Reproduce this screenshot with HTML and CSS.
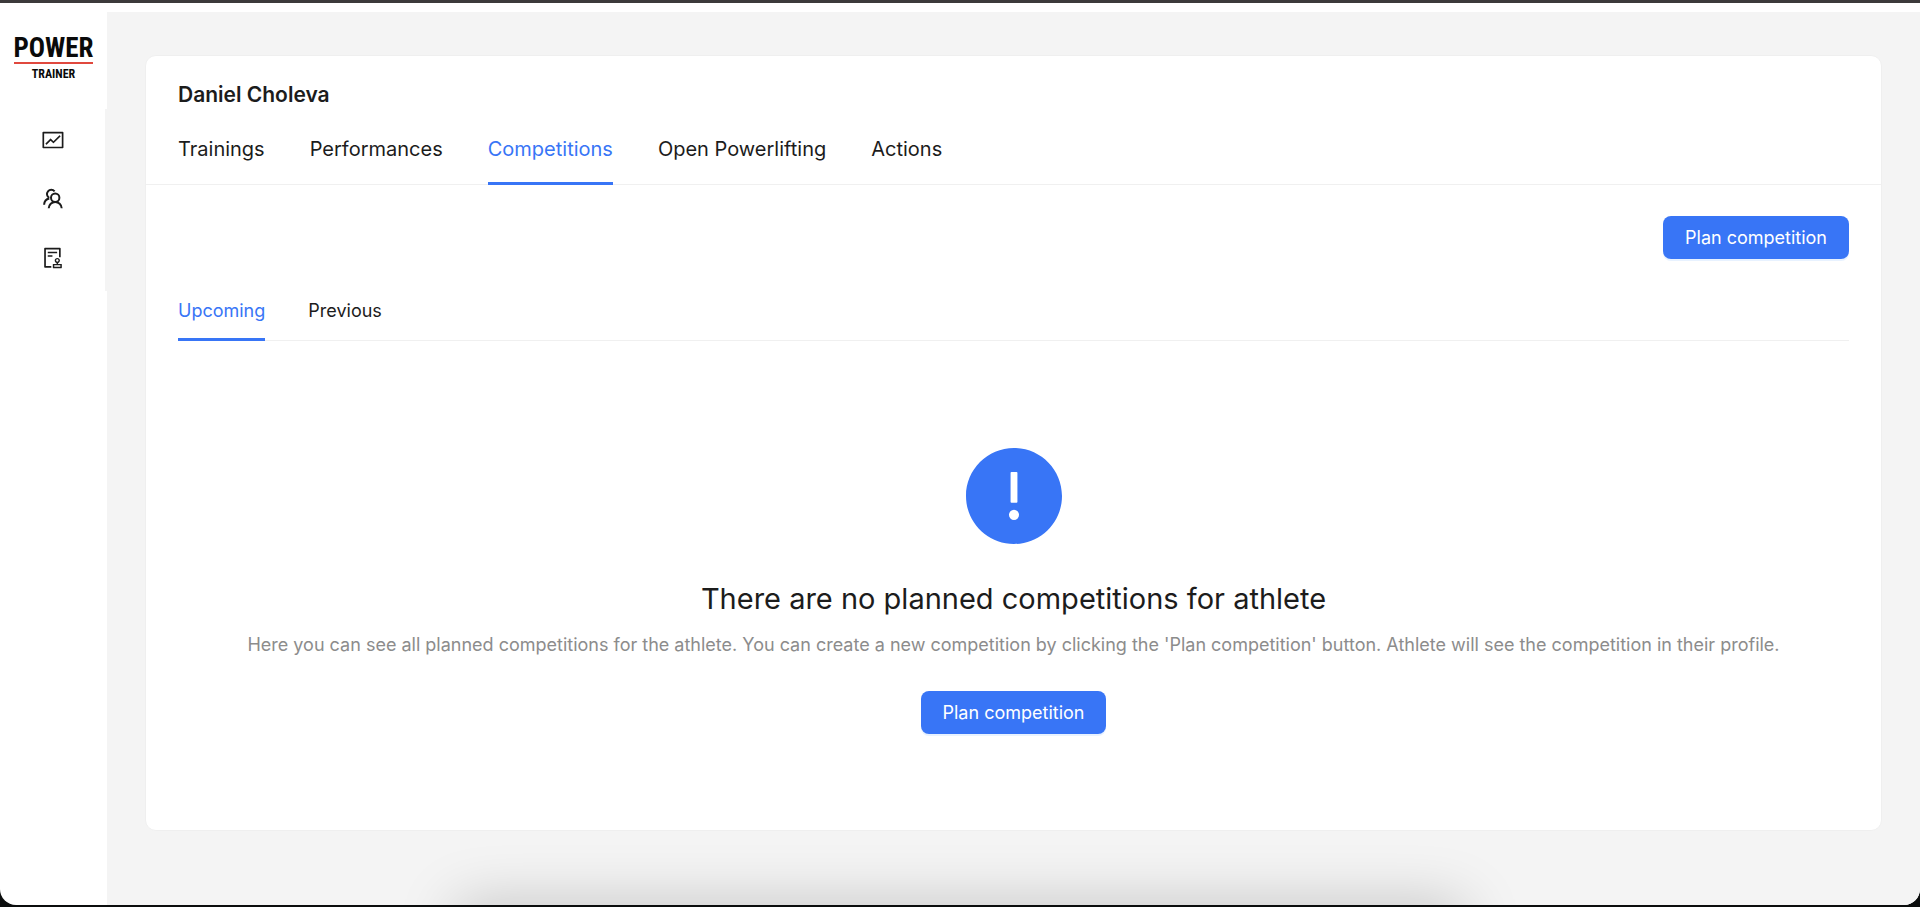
FILE: index.html
```html
<!DOCTYPE html>
<html lang="en">
<head>
<meta charset="utf-8">
<meta name="viewport" content="width=device-width, initial-scale=1">
<title>Power Trainer</title>
<link rel="stylesheet" href="styles.css">
</head>
<body>
<div class="window">
  <aside class="sidebar">
    <a class="logo" href="#">
      <span class="logo-main">POWER</span>
      <span class="logo-sub">TRAINER</span>
    </a>
    <nav class="menu">
      <a class="menu-item" href="#" aria-label="Dashboard">
        <svg class="icon" viewBox="0 0 1024 1024"><path d="M926 164H94c-17.7 0-32 14.3-32 32v640c0 17.7 14.3 32 32 32h832c17.7 0 32-14.3 32-32V196c0-17.7-14.3-32-32-32zm-40 632H134V236h752v560zm-658.9-82.3c3.1 3.1 8.2 3.1 11.3 0l172.5-172.5 114.4 114.5c3.1 3.1 8.2 3.1 11.3 0l297-297.2c3.1-3.1 3.1-8.2 0-11.3l-36.8-36.8a8.03 8.03 0 00-11.3 0L531 565 416.6 450.5a8.03 8.03 0 00-11.3 0l-214.9 215a8.03 8.03 0 000 11.3l36.7 36.9z"/></svg>
      </a>
      <a class="menu-item" href="#" aria-label="Athletes">
        <svg class="icon icon-line" viewBox="0 0 24 24"><circle cx="14.2" cy="10.7" r="4.2"/><path d="M7.7 21.3c.2-3.600 3-6.400 6.500-6.400s6.300 2.800 6.500 6.400M13.600 4.300a4.300 4.300 0 1 0-5.400 6.500M8.300 11.500c-3.100.6-5 3-5.200 6.200"/></svg>
      </a>
      <a class="menu-item" href="#" aria-label="Plans">
        <svg class="icon" viewBox="0 0 1024 1024"><path d="M296 250c-4.400 0-8 3.600-8 8v48c0 4.400 3.600 8 8 8h384c4.400 0 8-3.600 8-8v-48c0-4.400-3.600-8-8-8H296zm184 144H296c-4.400 0-8 3.600-8 8v48c0 4.400 3.600 8 8 8h184c4.400 0 8-3.600 8-8v-48c0-4.400-3.600-8-8-8zm-48 458H208V148h560v320c0 4.400 3.600 8 8 8h56c4.400 0 8-3.600 8-8V108c0-17.700-14.300-32-32-32H168c-17.700 0-32 14.300-32 32v784c0 17.700 14.300 32 32 32h264c4.400 0 8-3.600 8-8v-56c0-4.400-3.600-8-8-8zm440-88H728v-36.600c46.300-13.800 80-56.600 80-107.400 0-61.900-50.100-112-112-112s-112 50.100-112 112c0 50.700 33.700 93.600 80 107.400V764H520c-8.800 0-16 7.200-16 16v152c0 8.800 7.200 16 16 16h352c8.800 0 16-7.200 16-16V780c0-8.800-7.200-16-16-16zM646 620c0-27.600 22.400-50 50-50s50 22.400 50 50-22.400 50-50 50-50-22.400-50-50zm180 266H566v-60h260v60z"/></svg>
      </a>
    </nav>
  </aside>
  <main class="content">
    <section class="card">
      <header class="card-head">
        <h1 class="card-title">Daniel Choleva</h1>
        <nav class="tabs tabs-large">
          <button class="tab" type="button">Trainings</button>
          <button class="tab" type="button">Performances</button>
          <button class="tab tab-active" type="button">Competitions</button>
          <button class="tab" type="button">Open Powerlifting</button>
          <button class="tab" type="button">Actions</button>
        </nav>
      </header>
      <div class="card-body">
        <div class="toolbar">
          <button class="primary" type="button">Plan competition</button>
        </div>
        <nav class="tabs tabs-small">
          <button class="tab tab-active" type="button">Upcoming</button>
          <button class="tab" type="button">Previous</button>
        </nav>
        <div class="result">
          <svg class="result-icon" viewBox="64 64 896 896" aria-hidden="true"><path d="M512 64C264.600 64 64 264.600 64 512s200.600 448 448 448 448-200.600 448-448S759.400 64 512 64zm-32 232c0-4.400 3.600-8 8-8h48c4.400 0 8 3.600 8 8v272c0 4.400-3.600 8-8 8h-48c-4.400 0-8-3.600-8-8V296zm32 440a48.010 48.010 0 010-96 48.010 48.010 0 010 96z"/></svg>
          <h2 class="result-title">There are no planned competitions for athlete</h2>
          <p class="result-text">Here you can see all planned competitions for the athlete. You can create a new competition by clicking the 'Plan competition' button. Athlete will see the competition in their profile.</p>
          <button class="primary" type="button">Plan competition</button>
        </div>
      </div>
    </section>
  </main>
  <div class="dock-shadow"></div>
</div>
</body>
</html>
```
FILE: styles.css
```css
* {
  box-sizing: border-box;
}

body {
  margin: 0;
  background: #0b0d0d;
  color: #1c1c1c;
  font-family: Inter, "Liberation Sans", sans-serif;
}

button {
  font: inherit;
  cursor: pointer;
}

.window {
  position: relative;
  display: flex;
  min-height: calc(100vh - 2px);
  overflow: hidden;
  border-top: 3px solid #3c3a3b;
  border-radius: 0 0 16px 16px;
  background: #fff;
}

.sidebar {
  flex: none;
  width: 107px;
  padding-top: 31px;
}

.logo {
  display: flex;
  flex-direction: column;
  align-items: center;
  margin: 0 14px;
  color: #0a0a0a;
  font-family: "Liberation Sans Narrow", "Roboto Condensed", "Liberation Sans", sans-serif;
  font-weight: 700;
  text-decoration: none;
}

.logo-main {
  display: flex;
  justify-content: center;
  width: 100%;
  border-bottom: 2px solid #e0483e;
  font-size: 27px;
  line-height: 28px;
}

.logo-sub {
  padding-top: 2px;
  font-size: 12px;
  line-height: 16px;
}

.menu {
  display: flex;
  flex-direction: column;
  gap: 5px;
  margin-top: 27px;
  padding: 4px 0 6px;
  border-right: 2px solid #f4f4f4;
}

.menu-item {
  display: flex;
  align-items: center;
  justify-content: center;
  height: 54px;
  color: #1c1c1c;
}

.icon {
  width: 24px;
  height: 24px;
  fill: currentColor;
}

.icon-line {
  fill: none;
  stroke: currentColor;
  stroke-width: 2;
}

.content {
  flex: 1;
  min-width: 0;
  margin-top: 9px;
  padding: 43px 38px 72px;
  background: #f4f4f4;
}

.card {
  border: 1px solid #efefef;
  border-radius: 11px;
  background: #fff;
}

.card-head {
  padding: 22px 32px 0;
  border-bottom: 1px solid #f0f0f0;
}

.card-title {
  margin: 0;
  font-size: 21px;
  font-weight: 600;
  line-height: 34px;
}

.tabs {
  display: flex;
  gap: 43px;
}

.tab {
  margin-bottom: -1px;
  padding: 0;
  border: 0;
  border-bottom: 3px solid transparent;
  background: none;
  color: inherit;
  white-space: nowrap;
}

.tab-active {
  border-color: #3875f6;
  color: #3875f6;
}

.tabs-large {
  gap: 45px;
}

.tabs-large .tab {
  padding: 21px 0 17px;
  font-size: 20px;
  line-height: 32px;
}

.tabs-small {
  margin-top: 21px;
  border-bottom: 1px solid #f0f0f0;
}

.tabs-small .tab {
  padding: 16px 0 13px;
  font-size: 18px;
  line-height: 29px;
}

.card-body {
  padding: 31px 32px 96px;
}

.toolbar {
  display: flex;
  justify-content: flex-end;
}

.primary {
  padding: 7px 22px;
  border: 0;
  border-radius: 8px;
  background: #3875f6;
  box-shadow: 0 2px 0 #e8f2ff;
  color: #fff;
  font-size: 18px;
  line-height: 29px;
  white-space: nowrap;
}

.result {
  display: flex;
  flex-direction: column;
  align-items: center;
  padding-top: 107px;
  text-align: center;
}

.result-icon {
  width: 96px;
  height: 96px;
  fill: #3875f6;
}

.result-title {
  margin: 34px 0 0;
  font-size: 29px;
  font-weight: 400;
  line-height: 42px;
}

.result-text {
  margin: 10px 0 32px;
  color: #8c8c8c;
  font-size: 18px;
  line-height: 29px;
}

.dock-shadow {
  position: absolute;
  top: 100%;
  left: 24%;
  right: 24%;
  height: 40px;
  box-shadow: 0 4px 60px 4px rgba(0, 0, 0, 0.22);
  pointer-events: none;
}
```
